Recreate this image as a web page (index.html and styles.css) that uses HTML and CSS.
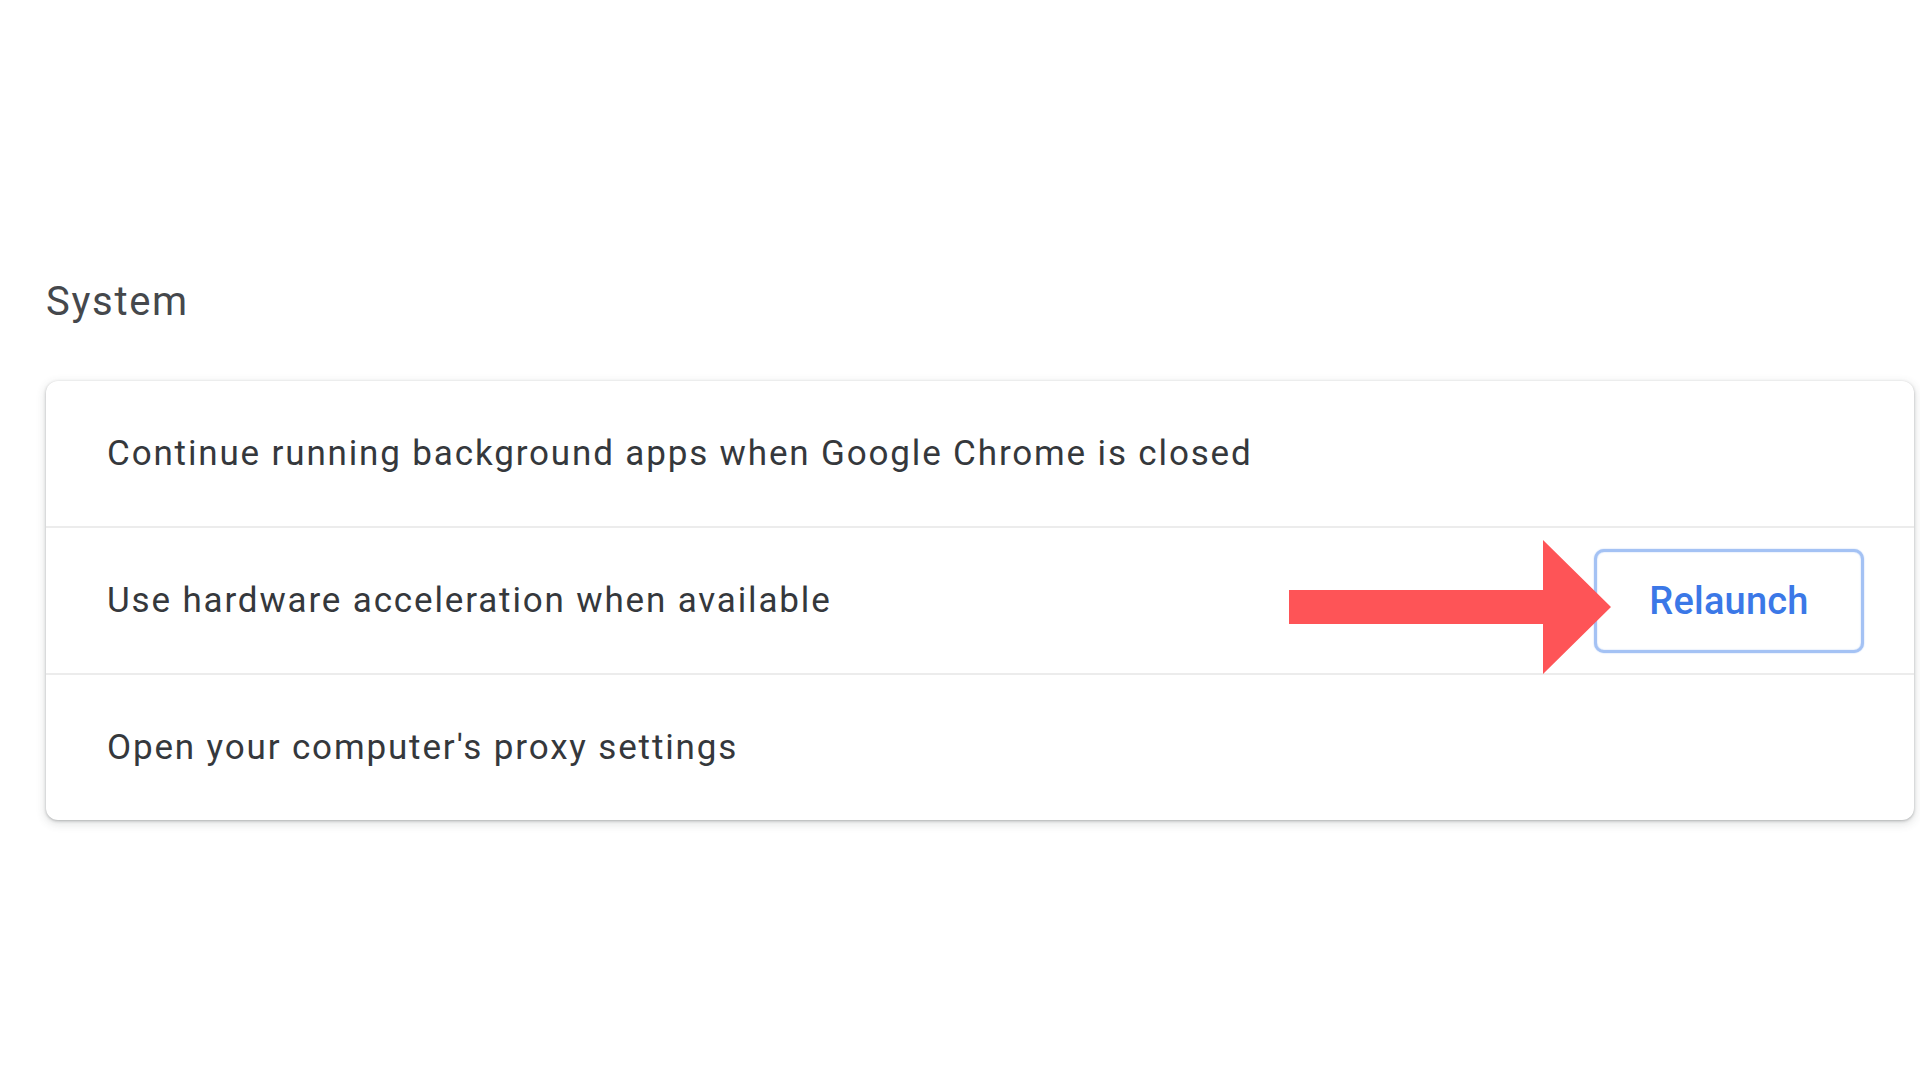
FILE: index.html
```html
<!DOCTYPE html>
<html lang="en">
<head>
<meta charset="utf-8">
<title>System settings</title>
<link rel="stylesheet" href="styles.css">
</head>
<body>
<main class="page">
  <h2 class="section-title">System</h2>
  <section class="card">
    <div class="row">
      <span class="row-label">Continue running background apps when Google Chrome is closed</span>
    </div>
    <div class="row">
      <span class="row-label">Use hardware acceleration when available</span>
      <button class="relaunch">Relaunch</button>
    </div>
    <div class="row">
      <span class="row-label">Open your computer's proxy settings</span>
    </div>
  </section>
</main>
<svg class="annotation-arrow" width="322" height="134" viewBox="0 0 322 134" aria-hidden="true">
  <polygon points="0,50 254,50 254,0 322,67 254,134 254,84 0,84" fill="#fe5457"/>
</svg>
</body>
</html>
```
FILE: styles.css
```css
html, body {
  margin: 0;
  padding: 0;
  background: #ffffff;
}

body {
  font-family: Roboto, "Liberation Sans", Arial, sans-serif;
  color: #3c4043;
  width: 1920px;
  height: 1080px;
  overflow: hidden;
  position: relative;
}

.page {
  padding: 278px 6px 0 46px;
}

.section-title {
  margin: 0 0 55px 0;
  font-size: 40px;
  line-height: 48px;
  font-weight: 400;
  letter-spacing: 1.7px;
  color: #45484c;
}

.card {
  background: #ffffff;
  border-radius: 12px;
  box-shadow: 0 1px 3px rgba(60, 64, 67, 0.35), 0 3px 8px 2px rgba(60, 64, 67, 0.12);
  display: flex;
  flex-direction: column;
}

.row {
  height: 145px;
  display: flex;
  align-items: center;
  justify-content: space-between;
  padding: 0 50px 0 61px;
}

.row + .row {
  border-top: 2px solid #ececec;
}

.row-label {
  font-size: 35px;
  letter-spacing: 1.85px;
  color: #35383c;
}

.relaunch {
  width: 270px;
  height: 104px;
  box-sizing: border-box;
  border: 3px solid #a4c2f4;
  border-radius: 10px;
  box-shadow: 0 0 1.5px #a4c2f4, inset 0 0 1.5px #a4c2f4;
  background: #ffffff;
  color: #3b78e7;
  font-family: Roboto, "Liberation Sans", Arial, sans-serif;
  font-size: 38px;
  font-weight: 500;
  letter-spacing: 0.2px;
  padding: 0;
}

.annotation-arrow {
  position: absolute;
  left: 1289px;
  top: 540px;
}
```
